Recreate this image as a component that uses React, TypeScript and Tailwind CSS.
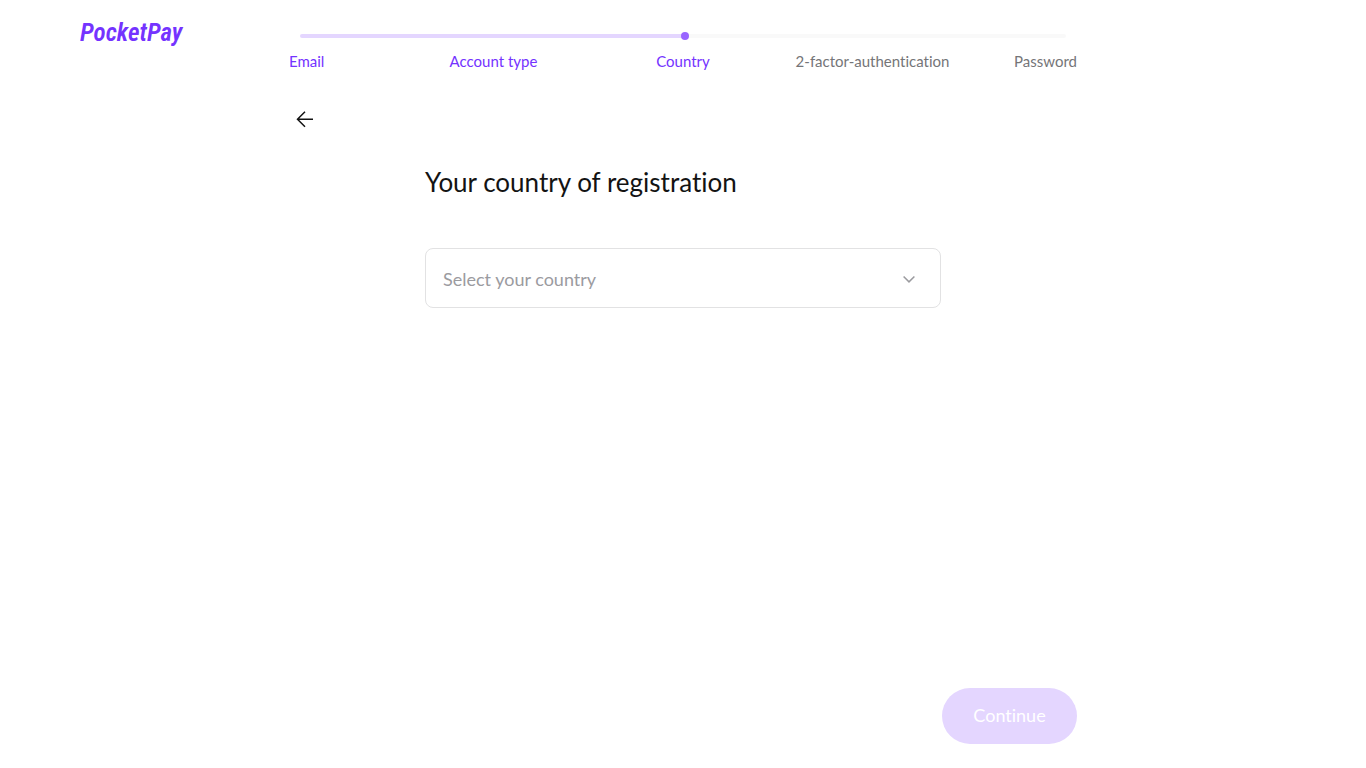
import { useState } from "react";

const steps = ["Email", "Account type", "Country", "2-factor-authentication", "Password"];
const countries = ["Austria", "France", "Germany", "Italy", "Spain"];
const currentStep = 2;

function Stepper() {
  return (
    <nav aria-label="Registration progress" className="min-w-0 pt-8">
      <div className="mx-[11px] flex h-2 items-center">
        <div className="h-1 flex-1 rounded-l-full bg-[#e4d6ff]" />
        <div className="z-10 -mr-1.5 -ml-0.5 size-2 shrink-0 rounded-full bg-[#9965ff]" />
        <div className="h-1 flex-1 rounded-r-full bg-[#f9f9f9]" />
      </div>
      <ol className="mt-[11px] grid grid-cols-[11fr_19fr_19fr_19fr_11fr] text-[15px] leading-5">
        {steps.map((step, i) => (
          <li
            key={step}
            aria-current={i === currentStep ? "step" : undefined}
            className={`flex min-w-0 whitespace-nowrap ${
              i === 0 ? "justify-start" : i === steps.length - 1 ? "justify-end" : "justify-center"
            } ${i <= currentStep ? "text-[#7433ff]" : "text-[#757578]"}`}
          >
            {step}
          </li>
        ))}
      </ol>
    </nav>
  );
}

export default function App() {
  const [country, setCountry] = useState("");
  return (
    <div className="flex min-h-screen flex-col bg-white font-['Lato',sans-serif] text-[#131313] [font-variant-ligatures:none]">
      <header className="grid grid-cols-[1fr_minmax(0,788px)_1fr]">
        <a
          href="#"
          className="pt-[17px] pl-20 font-['Roboto_Condensed','Roboto',sans-serif] text-[25px] leading-8 font-semibold text-[#7433ff] italic"
        >
          PocketPay
        </a>
        <Stepper />
      </header>
      <main className="mx-auto flex w-full max-w-[788px] flex-1 flex-col pt-8">
        <button type="button" aria-label="Back" className="flex size-8 items-center justify-center">
          <svg width="18" height="18" viewBox="0 0 18 18" fill="none" stroke="currentColor" strokeWidth="1.5">
            <path d="M17 9.3H2M9 1.8 1.5 9.3 9 16.8" />
          </svg>
        </button>
        <div className="mx-auto mt-[29px] w-full max-w-[516px]">
          <h1 className="text-[26px] leading-9">Your country of registration</h1>
          <div className="relative mt-12">
            <select
              aria-label="Select your country"
              value={country}
              onChange={(e) => setCountry(e.target.value)}
              className="h-[60px] w-full appearance-none rounded-lg border border-[#e2e2e3] bg-white px-[17px] pt-0.5 text-lg text-[#9b9b9f]"
            >
              <option value="">Select your country</option>
              {countries.map((name) => (
                <option key={name}>{name}</option>
              ))}
            </select>
            <svg
              className="pointer-events-none absolute top-6 right-[26px] text-[#9b9b9f]"
              width="12"
              height="14"
              viewBox="0 0 12 14"
              fill="none"
              stroke="currentColor"
              strokeWidth="1.5"
            >
              <path d="m.6 4.5 5.4 5.4 5.4-5.4" />
            </svg>
          </div>
        </div>
        <div className="mt-auto flex justify-end pb-6">
          <button
            type="button"
            disabled={!country}
            className="h-14 min-w-[135px] rounded-full bg-[#7433ff] px-[30px] pb-0.5 text-lg text-white disabled:bg-[#e4d6ff]"
          >
            Continue
          </button>
        </div>
      </main>
    </div>
  );
}
